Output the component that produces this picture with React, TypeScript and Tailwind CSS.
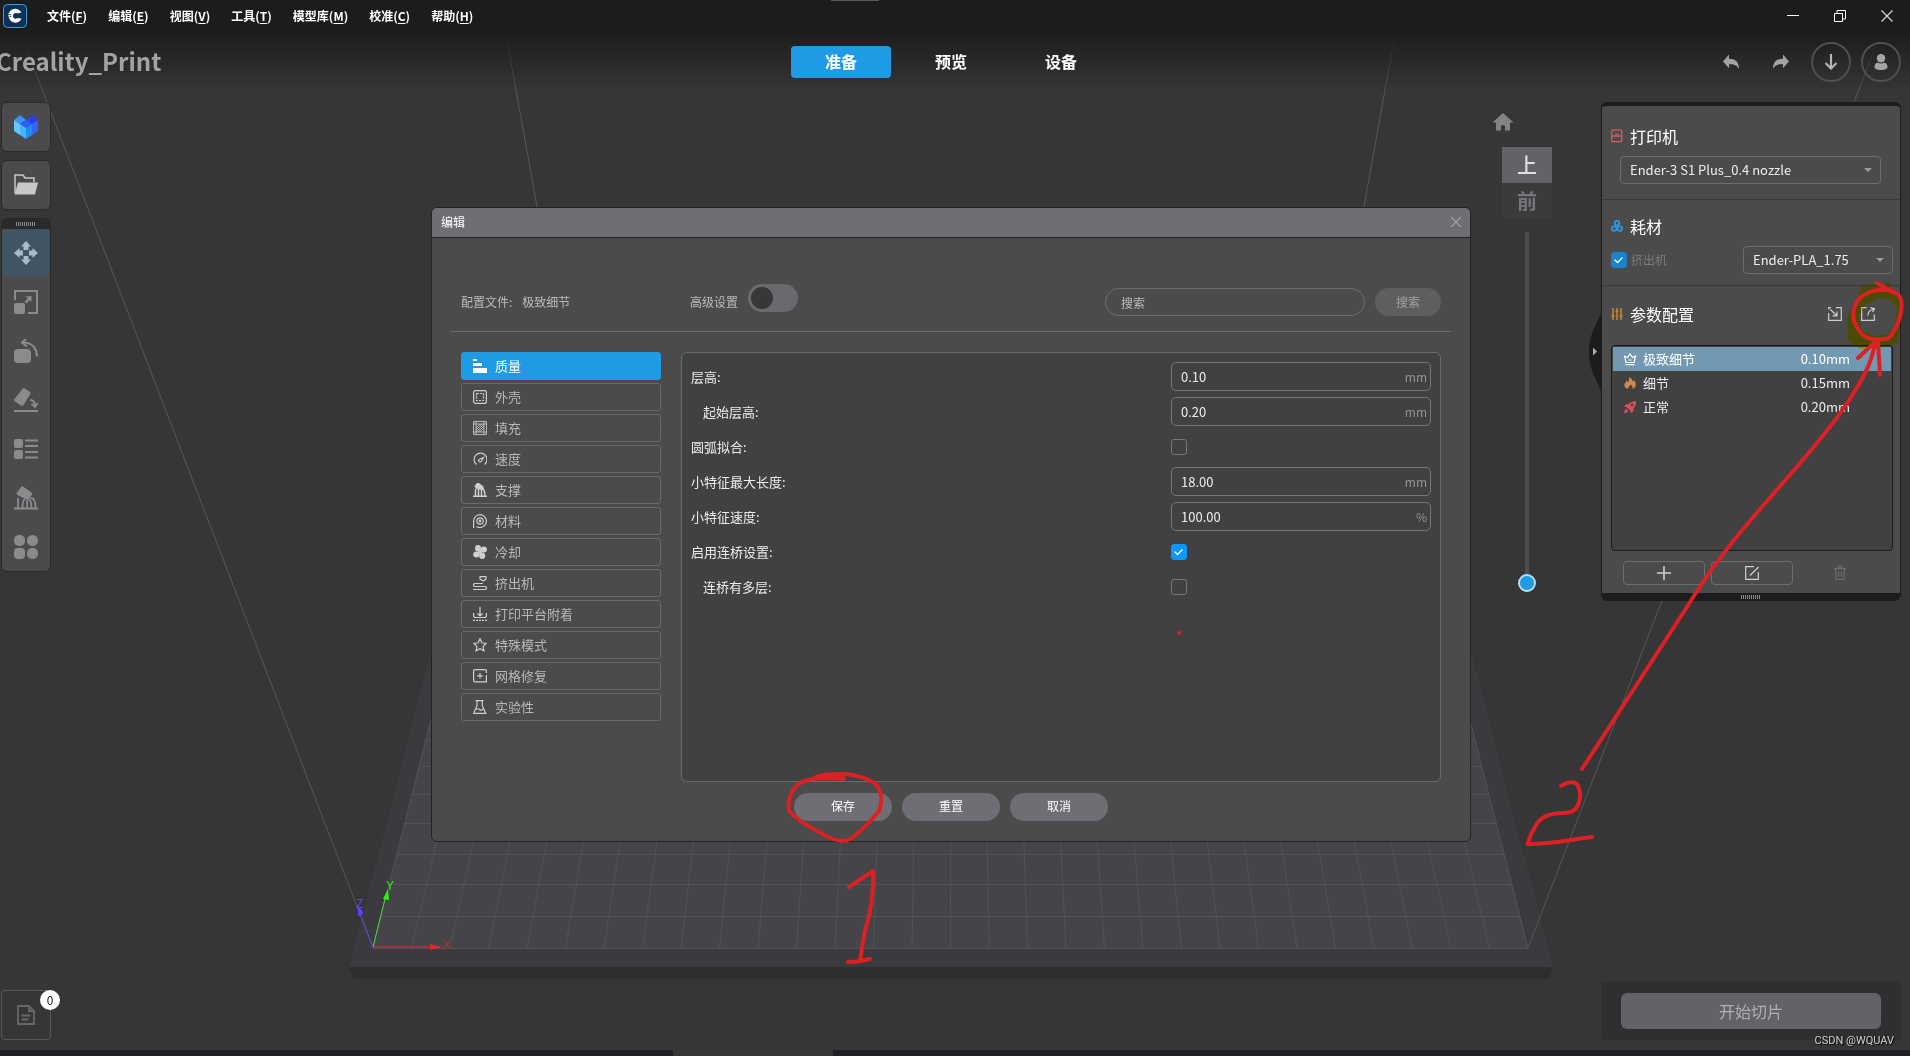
import { useState } from "react";
import type { ReactNode } from "react";

const menus = [
  { label: "文件", key: "F" },
  { label: "编辑", key: "E" },
  { label: "视图", key: "V" },
  { label: "工具", key: "T" },
  { label: "模型库", key: "M" },
  { label: "校准", key: "C" },
  { label: "帮助", key: "H" },
];

const tabs = ["准备", "预览", "设备"];

type Setting =
  | { id: string; label: string; kind: "value"; value: string; unit: string; sub?: boolean }
  | { id: string; label: string; kind: "check"; checked: boolean; sub?: boolean };

const settings: Setting[] = [
  { id: "layer-height", label: "层高:", kind: "value", value: "0.10", unit: "mm" },
  { id: "first-layer", label: "起始层高:", kind: "value", value: "0.20", unit: "mm", sub: true },
  { id: "arc-fitting", label: "圆弧拟合:", kind: "check", checked: false },
  { id: "small-length", label: "小特征最大长度:", kind: "value", value: "18.00", unit: "mm" },
  { id: "small-speed", label: "小特征速度:", kind: "value", value: "100.00", unit: "%" },
  { id: "bridge", label: "启用连桥设置:", kind: "check", checked: true },
  { id: "bridge-layers", label: "连桥有多层:", kind: "check", checked: false, sub: true },
];

export default function App() {
  return (
    <div className="relative flex min-h-screen flex-col overflow-hidden bg-[#363637] font-['Noto_Sans_CJK_SC','Noto_Sans',sans-serif] text-white">
      <Scene />
      <Header />
      <main className="relative flex flex-1 items-stretch px-px pt-2.5 pb-2.5">
        <LeftTools />
        <div className="flex-1" />
        <ViewControls />
        <button
          type="button"
          aria-label="收起面板"
          className="ml-[37px] mt-[210px] h-20 w-3 shrink-0"
        >
          <svg viewBox="0 0 12 80" className="h-20 w-3" aria-hidden>
            <path d="M12 0C9 12 0 20 0 40s9 28 12 40z" fill="#1c1c1e" />
            <path d="M4 35.500l4 4-4 4z" fill="#b0b0b0" />
          </svg>
        </button>
        <div className="mr-2 flex w-[300px] shrink-0 flex-col">
          <SidePanel />
          <div className="mt-auto rounded bg-[#2f2f31] px-5 py-[11px]">
            <button
              type="button"
              className="h-9 w-full rounded-md bg-[#636267] text-base leading-6 text-[#b0b0b2]"
            >
              开始切片
            </button>
          </div>
        </div>
      </main>
      <footer className="relative flex h-1.5 bg-[#1f2024]">
        <div className="ml-[35.25%] w-40 bg-[#363637]" />
      </footer>
      <EditDialog />
      <span className="absolute right-4 bottom-[7px] font-['Roboto',sans-serif] text-[11px] leading-4 text-[#d0d0d0] [text-shadow:1px_1px_1px_#000]">
        CSDN @WQUAV
      </span>
      <Highlighter />
      <Annotations />
    </div>
  );
}

function Header() {
  const [tab, setTab] = useState("准备");
  return (
    <header className="relative bg-linear-to-b from-[#1c1c1e] from-35% to-[#1c1c1e]/0">
      <div className="absolute top-0 left-[831px] h-px w-12 bg-[#5a5a5c]" />
      <div className="flex h-8 items-center pl-[3px]">
        <AppLogo />
        <nav className="ml-5 flex gap-[21px] text-xs font-bold">
          {menus.map((m) => (
            <button key={m.key} type="button">
              {m.label}(<span className="underline underline-offset-2">{m.key}</span>)
            </button>
          ))}
        </nav>
        <div className="ml-auto flex items-center gap-[35px] pr-[17px]">
          <button type="button" aria-label="最小化">
            <svg viewBox="0 0 12 12" className="h-3 w-3" aria-hidden>
              <path d="M0 5.500h12" stroke="#fff" />
            </svg>
          </button>
          <button type="button" aria-label="还原">
            <svg viewBox="0 0 12 12" className="h-3 w-3" fill="none" stroke="#fff" aria-hidden>
              <path d="M.5 3.500h8v8h-8zM3 3.500v-3h8.500V9H9" />
            </svg>
          </button>
          <button type="button" aria-label="关闭">
            <svg viewBox="0 0 12 12" className="h-3 w-3" stroke="#d8d8d8" strokeWidth="1.2" aria-hidden>
              <path d="M.5.5l11 11M11.500.5l-11 11" />
            </svg>
          </button>
        </div>
      </div>
      <div className="grid h-[60px] grid-cols-[1fr_auto_1fr] items-center">
        <h1 className="-ml-1 pb-0.5 text-2xl font-bold text-[#a3a3a4]">Creality_Print</h1>
        <div className="mr-2 flex gap-2.5">
          {tabs.map((t) => (
            <button
              key={t}
              type="button"
              onClick={() => setTab(t)}
              className={
                t === tab
                  ? "h-8 w-[100px] rounded bg-[#1e9be4] pb-0.5 text-base font-bold"
                  : "h-8 w-[100px] rounded pb-0.5 text-base font-bold"
              }
            >
              {t}
            </button>
          ))}
        </div>
        <div className="flex items-center justify-end gap-2.5 pr-[9px]">
          <button type="button" aria-label="撤销" className="flex size-10 items-center justify-center">
            <UndoIcon className="size-4" />
          </button>
          <button type="button" aria-label="重做" className="flex size-10 items-center justify-center">
            <UndoIcon className="size-4 -scale-x-100" />
          </button>
          <button
            type="button"
            aria-label="下载"
            className="flex size-10 items-center justify-center rounded-full border-2 border-[#4f4f51]"
          >
            <svg viewBox="0 0 16 16" className="size-4" fill="none" stroke="#b4b4b4" strokeWidth="2.200" aria-hidden>
              <path d="M8 0v14M2.500 9L8 14.500 13.500 9" />
            </svg>
          </button>
          <button
            type="button"
            aria-label="用户"
            className="flex size-10 items-center justify-center rounded-full border-2 border-[#4f4f51]"
          >
            <svg viewBox="0 0 16 16" className="size-4" fill="#a6a6a6" aria-hidden>
              <circle cx="8" cy="4.200" r="4.200" />
              <path d="M4.500 8.500Q8 10.500 11.500 8.500c2 1 3 2.500 3 4.200C14.500 15 12 16 8 16s-6.500-1-6.500-3.300c0-1.700 1-3.200 3-4.200z" />
            </svg>
          </button>
        </div>
      </div>
    </header>
  );
}

function LeftTools() {
  const box = "flex size-[50px] items-center justify-center rounded-md border border-[#2a2a2b] bg-[#4b4b4d]";
  return (
    <aside className="flex w-[50px] shrink-0 flex-col gap-2">
      <button type="button" aria-label="模型库" className={box}>
        <svg viewBox="0 0 24 24" className="size-6" aria-hidden>
          <path d="M0 5l6-5 6 5-6 4z" fill="#3b93fb" />
          <path d="M12 5l6-5 6 5-6 4z" fill="#2a3fee" />
          <path d="M6 9l6-4 6 4-6 4z" fill="#2b62f5" />
          <path d="M0 5l6 4v11l-6-4z" fill="#66c6ff" />
          <path d="M6 9l6 4v11l-6-4z" fill="#45b3fb" />
          <path d="M12 13l6-4v11l-6 4z" fill="#1f8cf0" />
          <path d="M18 9l6-4v11l-6 4z" fill="#3462fb" />
        </svg>
      </button>
      <button type="button" aria-label="打开文件" className={box}>
        <svg viewBox="0 0 24 24" className="size-6" aria-hidden>
          <path d="M1 20V2h8l2 3h9v4" fill="none" stroke="#c8c8c8" strokeWidth="1.500" />
          <path d="M4 9.500h20L21 21.500H.5z" fill="#c8c8c8" />
        </svg>
      </button>
      <div className="rounded-md border border-[#2a2a2b] bg-[#4b4b4d]">
        <div className="flex h-2.5 items-center justify-center rounded-t bg-[#2a2a2c]">
          <Grip />
        </div>
        <div className="flex flex-col gap-px">
          <ToolButton label="移动" active>
            <path d="M12 0l5 5.500h-2.500V9h-5V5.500H7zM12 24l5-5.500h-2.500V15h-5v3.500H7zM0 12l5.500-5v2.500H9v5H5.500V17zM24 12l-5.500-5v2.500H15v5h3.500V17z" />
          </ToolButton>
          <ToolButton label="缩放">
            <path d="M1 10V1h22v22H14" fill="none" stroke="currentColor" strokeWidth="2" />
            <rect y="13" width="11" height="11" rx="2" />
            <path d="M17.500 6v6l-2-2-3 3.500-2-2L14 8.500 11.500 6.500z" />
          </ToolButton>
          <ToolButton label="旋转">
            <rect y="10" width="17" height="14" rx="4" />
            <path d="M9 3.500c8 0 13.500 5 14 14" fill="none" stroke="currentColor" strokeWidth="2.200" />
            <path d="M12 0L8 3.500l5 4" fill="none" stroke="currentColor" strokeWidth="2.200" />
          </ToolButton>
          <ToolButton label="底面选择">
            <path d="M8.500 1Q9.500-.5 11 .5l5 3.500q1 1 0 2.500L9.500 17q-1 1.500-2.500.5l-6-4q-1.500-1-.5-2.500zM0 22h24v2H0z" />
            <path d="M16 12c3 0 5 2 5 6.500M17.500 16l3.500 3 2.500-4" fill="none" stroke="currentColor" strokeWidth="1.800" />
          </ToolButton>
          <ToolButton label="排列">
            <rect y="2" width="9" height="9" rx="2" />
            <rect y="13" width="9" height="9" rx="2" />
            <path d="M11 2.500h13v2H11zM11 8h13v2H11zM11 14h13v2H11zM11 19.500h13v2H11z" />
          </ToolButton>
          <ToolButton label="支撑">
            <path d="M7 1q1-1 2-.5l8.500 6q1 1 .5 2L15 13q-1 1-2.500.5L3.500 9q-1.500-1-1-2zM0 21.500h24v2H0z" />
            <path d="M4 22V12M8.500 22c0-5 .5-8 2.500-9M13 22v-8M17.500 22c0-5-1-8-3-9M21.500 22c0-6-1-10-5-10" fill="none" stroke="currentColor" strokeWidth="1.800" />
          </ToolButton>
          <ToolButton label="更多">
            <rect width="11" height="11" rx="5" />
            <circle cx="18.500" cy="5.500" r="5.500" />
            <rect y="13" width="11" height="11" rx="4" />
            <rect x="13" y="13" width="11" height="11" rx="5" />
          </ToolButton>
        </div>
      </div>
      <button
        type="button"
        aria-label="日志"
        className="relative mt-auto flex size-[50px] items-center justify-center rounded border border-[#59595b]"
      >
        <svg viewBox="0 0 18 20" className="h-5 w-[18px]" fill="none" stroke="#68686b" strokeWidth="1.800" aria-hidden>
          <path d="M1 1h11l5 5v13H1zM12 1v5h5M4.500 10.500h9M4.500 14.500h7" />
        </svg>
        <span className="absolute -top-px left-[38px] flex size-5 items-center justify-center rounded-full bg-white text-xs leading-none text-[#222]">
          0
        </span>
      </button>
    </aside>
  );
}

function ToolButton({ label, active, children }: { label: string; active?: boolean; children: ReactNode }) {
  return (
    <button
      type="button"
      aria-label={label}
      className={
        active
          ? "flex h-12 w-full items-center justify-center rounded-md bg-[#405561] text-[#a9bac8]"
          : "flex h-12 w-full items-center justify-center text-[#8b8b8e]"
      }
    >
      <svg viewBox="0 0 24 24" className="size-6" fill="currentColor" aria-hidden>
        {children}
      </svg>
    </button>
  );
}

function Grip() {
  return (
    <svg viewBox="0 0 20 4" className="h-1 w-5" aria-hidden>
      <path d="M.5 0v4M2.500 0v4M4.500 0v4M6.500 0v4M8.500 0v4M10.500 0v4M12.500 0v4M14.500 0v4M16.500 0v4M18.500 0v4" stroke="#8a8a8c" strokeWidth="1" />
    </svg>
  );
}

function ViewControls() {
  return (
    <div className="mt-[11px] flex w-[59px] shrink-0 flex-col items-end">
      <button type="button" aria-label="主视图" className="self-start">
        <svg viewBox="0 0 20 18" className="h-[18px] w-5" fill="#838386" aria-hidden>
          <path d="M10 0l10.500 9.500H17V17.500h-5V13q-2-2-4 0v4.500H3V9.500H-.5z" />
        </svg>
      </button>
      <button type="button" className="mt-4 h-9 w-[50px] bg-[#636267] text-xl leading-6 font-medium text-[#e0e0e0]">
        上
      </button>
      <button type="button" className="h-[35px] w-[50px] bg-[#3b3b3c] text-xl leading-6 font-bold text-[#77777b]">
        前
      </button>
      <input
        type="range"
        aria-label="缩放"
        defaultValue={100}
        className="mt-3.5 mr-4 h-[360px] w-[18px] appearance-none bg-transparent [writing-mode:vertical-lr] [&::-webkit-slider-runnable-track]:w-1 [&::-webkit-slider-runnable-track]:bg-[#4e4e50] [&::-webkit-slider-thumb]:-ml-[7px] [&::-webkit-slider-thumb]:size-[18px] [&::-webkit-slider-thumb]:appearance-none [&::-webkit-slider-thumb]:rounded-full [&::-webkit-slider-thumb]:border-2 [&::-webkit-slider-thumb]:border-[#b9dcf2] [&::-webkit-slider-thumb]:bg-[#1e9be4]"
      />
    </div>
  );
}

function SidePanel() {
  const [profile, setProfile] = useState("极致细节");
  const profiles = [
    { name: "极致细节", height: "0.10mm", icon: <CrownIcon /> },
    { name: "细节", height: "0.15mm", icon: <FlameIcon /> },
    { name: "正常", height: "0.20mm", icon: <RocketIcon /> },
  ];
  return (
    <section className="overflow-hidden rounded-md border border-t-4 border-b-0 border-[#1c1c1e] bg-[#4b4b4c]">
      <div className="border-b border-[#3a3a3b] pt-[18px] pr-[19px] pb-[15px] pl-[9px]">
        <PanelTitle title="打印机">
          <g fill="none" stroke="#e05a5e" strokeWidth="1.300">
            <rect x=".7" y=".2" width="10" height="11.500" rx="1" />
            <path d="M.7 6h10M4 4.200h3.500" />
          </g>
        </PanelTitle>
        <div className="mt-2 ml-[9px]">
          <Dropdown label="打印机" options={["Ender-3 S1 Plus_0.4 nozzle"]} />
        </div>
      </div>
      <div className="border-b border-[#3a3a3b] pt-3.5 pr-[7px] pb-[11px] pl-[9px]">
        <PanelTitle title="耗材">
          <g fill="none" stroke="#2f95e0" strokeWidth="1.800">
            <circle cx="6" cy="3.200" r="2.300" />
            <circle cx="3.200" cy="8.600" r="2.300" />
            <circle cx="8.800" cy="8.600" r="2.300" />
          </g>
        </PanelTitle>
        <div className="mt-2 flex items-center">
          <Check id="extruder" checked tone="bg-[#1a83cc] border-[#1a83cc]" />
          <label htmlFor="extruder" className="ml-1 text-xs leading-5 text-[#7b7b7d]">
            挤出机
          </label>
          <div className="ml-auto w-[150px]">
            <Dropdown label="耗材" options={["Ender-PLA_1.75"]} />
          </div>
        </div>
      </div>
      <div className="pt-4 pr-[7px] pb-2 pl-[9px]">
        <div className="flex items-center">
          <PanelTitle title="参数配置">
            <path d="M2 0v12M6 0v12M10 0v12M.5 8h3M4.500 3.500h3M8.500 8h3" fill="none" stroke="#d98a24" strokeWidth="1.400" />
          </PanelTitle>
          <button type="button" aria-label="导入" className="ml-auto">
            <LineIcon>
              <path d="M.7 6V13.300h12.600V.7H8M.7 2.500V.7H3M2.500 2.500l6 6M9 4.500v4.300H4.500" />
            </LineIcon>
          </button>
          <button type="button" aria-label="导出" className="mr-[18px] ml-[19px]">
            <LineIcon>
              <path d="M5.500.7H.7v12.600h12.600V7.500M7 8.500q-.5-5 6-6.500M9.500.7L13.500 1.800 11.500 5" />
            </LineIcon>
          </button>
        </div>
        <ul className="mt-[19px] h-[206px] rounded border border-[#1c1c1e] bg-[#414142] p-px">
          {profiles.map((p) => (
            <li key={p.name}>
              <button
                type="button"
                onClick={() => setProfile(p.name)}
                className={
                  p.name === profile
                    ? "flex h-6 w-full items-center bg-[#7299b1] pl-[11px] text-[13px] leading-5"
                    : "flex h-6 w-full items-center pl-[11px] text-[13px] leading-5 text-[#ededed]"
                }
              >
                {p.icon}
                <span className="ml-[7px]">{p.name}</span>
                <span className="mr-[41px] ml-auto">{p.height}</span>
              </button>
            </li>
          ))}
        </ul>
        <div className="mt-2.5 mr-3 ml-3 grid grid-cols-3 gap-1.5">
          <button type="button" aria-label="新建" className="flex h-6 items-center justify-center rounded border border-[#6d6d6f]">
            <LineIcon>
              <path d="M7 0v14M0 7h14" strokeWidth="1.600" />
            </LineIcon>
          </button>
          <button type="button" aria-label="编辑" className="flex h-6 items-center justify-center rounded border border-[#6d6d6f]">
            <LineIcon>
              <path d="M9 .7H.7v12.600h12.600V6M5 9.500L13.500 1" />
            </LineIcon>
          </button>
          <button type="button" aria-label="删除" disabled className="flex h-6 items-center justify-center text-[#6b6b6d]">
            <svg viewBox="0 0 14 14" className="size-3.5" fill="none" stroke="currentColor" strokeWidth="1.200" aria-hidden>
              <path d="M1 2.700h12M5 2.500V.7h4v1.800M2.500 3l.5 10.300h8L11.500 3M5.500 5.500v5.500M8.500 5.500v5.500" />
            </svg>
          </button>
        </div>
      </div>
      <div className="flex h-2 items-center justify-center bg-[#1c1c1e]">
        <Grip />
      </div>
    </section>
  );
}

function PanelTitle({ title, children }: { title: string; children: ReactNode }) {
  return (
    <h2 className="flex items-center gap-[7px] text-base leading-6">
      <svg viewBox="0 0 12 12" className="size-3 overflow-visible" aria-hidden>
        {children}
      </svg>
      {title}
    </h2>
  );
}

function Dropdown({ label, options }: { label: string; options: string[] }) {
  return (
    <div className="grid items-center">
      <select
        aria-label={label}
        className="col-start-1 row-start-1 h-7 w-full appearance-none rounded border border-[#6d6d6f] bg-transparent px-[9px] text-[13px] text-[#ededed]"
      >
        {options.map((o) => (
          <option key={o}>{o}</option>
        ))}
      </select>
      <svg viewBox="0 0 8 4" className="pointer-events-none col-start-1 row-start-1 mr-[9px] h-1 w-2 justify-self-end" aria-hidden>
        <path d="M0 0h8L4 4z" fill="#9c9c9e" />
      </svg>
    </div>
  );
}

function Check({ id, checked, tone }: { id: string; checked: boolean; tone: string }) {
  const [on, setOn] = useState(checked);
  return (
    <span className="grid size-4 shrink-0">
      <input
        id={id}
        type="checkbox"
        checked={on}
        onChange={(e) => setOn(e.target.checked)}
        className={`col-start-1 row-start-1 size-4 appearance-none rounded-[3px] border ${on ? tone : "border-[#77777a]"}`}
      />
      {on && (
        <svg viewBox="0 0 16 16" className="pointer-events-none col-start-1 row-start-1 size-4" fill="none" stroke="#fff" strokeWidth="1.300" aria-hidden>
          <path d="M3.500 7.500l3 3L11.500 5.500" />
        </svg>
      )}
    </span>
  );
}

function LineIcon({ children }: { children: ReactNode }) {
  return (
    <svg viewBox="0 0 14 14" className="size-3.5 shrink-0" fill="none" stroke="#cfcfd2" strokeWidth="1.200" aria-hidden>
      {children}
    </svg>
  );
}

const sections: { name: string; icon: ReactNode }[] = [
  { name: "质量", icon: <path d="M0 0h4v2H0zM0 4h9v3H0zM0 9h14v5H0z" fill="#fff" stroke="none" /> },
  {
    name: "外壳",
    icon: (
      <>
        <rect x=".6" y=".6" width="12.800" height="12.800" rx="2" />
        <path d="M4 3.500h6.500v7H3.500v-7z" strokeDasharray="2 1.200" />
      </>
    ),
  },
  {
    name: "填充",
    icon: <path d="M.5.500h13v13H.500zM3 0v14M11 0v14M0 3h14M0 11h14M3 7l4-4M3 11l8-8M7 11l4-4M3 9l6-6M5 11l6-6" strokeWidth=".8" />,
  },
  {
    name: "速度",
    icon: (
      <>
        <path d="M3.500 12.500A6.400 6.400 0 1 1 11.500 12.500" />
        <path d="M10.500 5.500L7 7a1.500 1.500 0 1 0 1.500 2z" />
      </>
    ),
  },
  {
    name: "支撑",
    icon: (
      <>
        <path d="M1.500 3l2.500-3 2 0 4.500 3.500V7L3 6z" fill="#cfced4" stroke="none" />
        <path d="M2.500 13V6M5.500 13V6M8.500 13V6M9.500 5c2 2 2.500 5 2.500 8M0 13.300h14" strokeWidth="1.500" />
      </>
    ),
  },
  {
    name: "材料",
    icon: (
      <>
        <path d="M.6 14V7A6.400 6.400 0 1 1 3.500 12.500" />
        <circle cx="7" cy="7" r="3.200" />
        <circle cx="7" cy="7" r=".8" />
      </>
    ),
  },
  {
    name: "冷却",
    icon: (
      <g fill="#cfced4" stroke="none">
        <ellipse cx="5" cy="3.300" rx="3" ry="3.300" />
        <ellipse cx="10.800" cy="4.500" rx="3.200" ry="3" />
        <ellipse cx="9.200" cy="10.700" rx="3" ry="3.300" />
        <ellipse cx="3.400" cy="9.500" rx="3.200" ry="3" />
        <circle cx="7.100" cy="7" r="2" />
      </g>
    ),
  },
  {
    name: "挤出机",
    icon: <path d="M7 .6h6v2.500l-2 1.500H9.500L7 3zM10 7.500H2a1.500 1.500 0 0 0 0 3h10a1.500 1.500 0 0 1 0 3H0" />,
  },
  {
    name: "打印平台附着",
    icon: (
      <>
        <path d="M7 0v9M4.500 6.500L7 9l2.500-2.500M.6 6v2.500q0 2 2 2h8.800q2 0 2-2V6" />
        <path d="M0 13.400h14" strokeDasharray="2 1" />
      </>
    ),
  },
  {
    name: "特殊模式",
    icon: <path d="M7 .8l1.900 4 4.400.6-3.200 3 .8 4.500L7 10.800l-3.900 2.100.8-4.500-3.200-3 4.400-.6z" />,
  },
  {
    name: "网格修复",
    icon: <path d="M13.400 4V2q0-1.400-1.400-1.400H2Q.6.6.6 2v9.500q0 1.400 1.400 1.400h11.400V6M7 4v5.500M4.200 6.800h5.600" />,
  },
  {
    name: "实验性",
    icon: <path d="M2.500.7h8M4 .7v5L.7 13.300h12L9.300 5.700v-5M3 9.500q2-1.500 3.500 0t3.500-.5" />,
  },
];

function EditDialog() {
  const [section, setSection] = useState("质量");
  return (
    <div className="absolute inset-x-0 top-[207px] flex justify-center pr-2">
      <div
        role="dialog"
        aria-labelledby="edit-title"
        className="w-[1040px] overflow-hidden rounded-md border border-[#232325] bg-[#4b4b4c] text-xs"
      >
        <div className="flex h-[30px] items-center justify-between border-b border-[#232325] bg-[#6f6e73] px-[9px] pb-0.5">
          <h2 id="edit-title">编辑</h2>
          <button type="button" aria-label="关闭">
            <svg viewBox="0 0 10 10" className="size-2.5" stroke="#a8a8ac" strokeWidth="1.200" aria-hidden>
              <path d="M0 0l10 10M10 0L0 10" />
            </svg>
          </button>
        </div>
        <div className="mx-[19px] flex h-[94px] items-end border-b border-[#6d6d6f] px-2.5 pb-[15px] text-[#bcbcbe]">
          <p className="w-[229px] leading-7">
            配置文件:<span className="ml-2.5">极致细节</span>
          </p>
          <label htmlFor="advanced" className="leading-7">
            高级设置
          </label>
          <input
            id="advanced"
            type="checkbox"
            role="switch"
            className="mb-1 ml-2.5 h-7 w-[50px] appearance-none rounded-full bg-[#6a6a6e] p-[3px] before:block before:size-[22px] before:rounded-full before:bg-[#373738] checked:bg-[#1e9be4] checked:before:ml-auto"
          />
          <input
            type="text"
            aria-label="搜索"
            placeholder="搜索"
            className="ml-auto h-7 w-[260px] rounded-full border border-[#6d6d6f] px-[15px] placeholder:text-[#bcbcbe]"
          />
          <button type="button" className="ml-2.5 h-7 w-[66px] rounded-full bg-[#5e5e61] text-[#a0a0a2]">
            搜索
          </button>
        </div>
        <div className="mx-[29px] mt-5 flex gap-5">
          <nav className="flex w-[200px] shrink-0 flex-col gap-[3px]">
            {sections.map((s) => (
              <button
                key={s.name}
                type="button"
                onClick={() => setSection(s.name)}
                className={
                  s.name === section
                    ? "flex h-7 items-center gap-2 rounded-[3px] border border-[#1e9be4] bg-[#1e9be4] pl-[11px] text-[13px] leading-5 text-white"
                    : "flex h-7 items-center gap-2 rounded-[3px] border border-[#6a6a6c] pl-[11px] text-[13px] leading-5 text-[#b9b9bb]"
                }
              >
                <LineIcon>{s.icon}</LineIcon>
                {s.name}
              </button>
            ))}
          </nav>
          <div className="h-[430px] flex-1 rounded-md border border-[#6a6a6c] bg-[#414142] px-[9px] pt-1.5 text-[13px]">
            {settings.map((s) => (
              <div key={s.id} className="flex h-[35px] items-center">
                <label htmlFor={s.id} className={s.sub ? "flex-1 pl-3 text-[#ececec]" : "flex-1 text-[#ececec]"}>
                  {s.label}
                </label>
                <div className="w-[260px]">
                  {s.kind === "value" ? (
                    <div className="flex h-[29px] items-center rounded-[5px] border border-[#77777a] pr-[3px] pl-[9px]">
                      <input id={s.id} type="text" defaultValue={s.value} className="min-w-0 flex-1 text-[#ededed] outline-none" />
                      <span className="text-xs text-[#939395]">{s.unit}</span>
                    </div>
                  ) : (
                    <Check id={s.id} checked={s.checked} tone="bg-[#0c98fb] border-[#0c98fb]" />
                  )}
                </div>
              </div>
            ))}
          </div>
        </div>
        <div className="flex justify-center gap-2.5 pt-[11px] pb-5">
          {["保存", "重置", "取消"].map((b) => (
            <button key={b} type="button" className="h-7 w-[98px] rounded-full bg-[#6f6e74] pb-0.5 text-white">
              {b}
            </button>
          ))}
        </div>
      </div>
    </div>
  );
}

// Build plate in perspective: every depth line runs to the point (950, -1323).
function Scene() {
  const near = 948;
  const far = 640;
  const k = (far + 1323) / (near + 1323);
  const columns = Array.from({ length: 31 }, (_, i) => 373 + i * 38.5);
  const rows = [663, 689, 714, 740, 766, 794, 823, 854, 884, 916, 948];
  return (
    <svg
      viewBox="0 0 1910 1056"
      preserveAspectRatio="xMidYMid slice"
      className="absolute inset-0 h-full w-full"
      fill="none"
      aria-hidden
    >
      <path d="M434 640h1034l85 327H349z" fill="#3b3a3e" />
      <path d="M349 967h1204l-4 12H353z" fill="#2e2e30" />
      <path d={`M${950 - 577 * k} ${far}H${950 + 577 * k}L1528 ${near}H373z`} fill="#454448" />
      <g stroke="#535357">
        {columns.map((x) => (
          <path key={x} d={`M${x} ${near}L${950 + (x - 950) * k} ${far}`} />
        ))}
        {rows.map((y) => {
          const half = (577.5 * (y + 1323)) / (near + 1323);
          return <path key={y} d={`M${950.5 - half} ${y + 0.5}H${950.5 + half}`} />;
        })}
      </g>
      <path d="M373 948L23 40M1528 948L1878 40M507 40l31 172M1394 40l-31 172" stroke="#57575a" />
      <path d="M373 947h60" stroke="#e02a2a" />
      <path d="M430 944l12 3-12 3z" fill="#e02a2a" />
      <path d="M373 947l12-48" stroke="#4be03a" />
      <path d="M383 899l5-10 1 11z" fill="#36f01c" />
      <path d="M373 947l-14-36" stroke="#5c48e0" />
      <path d="M358 906l5 7-4 3z" fill="#6440ff" stroke="#6440ff" />
      <g fontSize="12" fontFamily="Liberation Sans, sans-serif">
        <text x="443" y="949" fill="#c02c2c">X</text>
        <text x="386" y="890" fill="#36f01c">Y</text>
        <text x="356" y="908" fill="#5c48e0">Z</text>
      </g>
    </svg>
  );
}

// Yellow marker around the export button, blended so the button shows through.
function Highlighter() {
  return (
    <svg
      viewBox="0 0 1910 1056"
      preserveAspectRatio="xMidYMid slice"
      className="pointer-events-none absolute inset-0 h-full w-full mix-blend-multiply"
      aria-hidden
    >
      <path
        d="M1862 286l28-3v10l12 7-4 43-18 5-20 1-12-9-1-22 8-15zM1880 298l-14 6-7 12 2 14 12 6 14-1 8-10 2-16-5-8z"
        fill="#ffff10"
        fillRule="evenodd"
      />
    </svg>
  );
}

// Red pen marks drawn over the window.
function Annotations() {
  return (
    <svg
      viewBox="0 0 1910 1056"
      preserveAspectRatio="xMidYMid slice"
      className="pointer-events-none absolute inset-0 h-full w-full"
      fill="none"
      aria-hidden
    >
      <g stroke="#dc2023" strokeWidth="4" strokeLinecap="round" strokeLinejoin="round">
        <path d="M844 779C815 777 806 779 797 785 790 793 786 806 790 812 798 821 813 829 828 837 836 841 846 842 850 839 860 833 875 816 879 811 883 801 882 793 877 785 870 779 852 773 840 774 830 774 822 774 816 777H842" />
        <path d="M849 887l24-16c1 26-3 44-8 60l-5 29M848 962q10 0 22-3" />
        <path d="M1561 786c8-5 15-5 17 0 3 6 3 14-1 21-2 4-8 6-14 6-16 0-24 5-28 14-4 6-6 12-7 16-1 2 0 1 2 1 24 0 42-5 62-7" />
        <path d="M1582 769L1685 610C1714 563 1738 534 1768 500 1796 468 1828 432 1848 402 1862 380 1872 364 1875 342L1858 358M1878 342l2 33" />
        <path d="M1877 283l18 10C1888 288 1874 289 1866 294 1854 299 1852 314 1854 321 1858 331 1863 338 1873 339 1880 339 1889 341 1892 334 1899 324 1903 310 1901 300 1900 295 1896 292 1889 290" />
      </g>
      <circle cx="1179" cy="633" r="2" fill="#c92a35" />
    </svg>
  );
}

function AppLogo() {
  return (
    <svg viewBox="0 0 24 24" className="size-6" aria-hidden>
      <rect x=".5" y=".5" width="23" height="23" rx="4" fill="#0d3156" stroke="#3aa3d8" />
      <path d="M18.500 8.500C16 4.500 12 4 9 5.500c-1.500.8-2.500 2-3 3.500l-1.500.5 1.500 1-1 1 1 .8-.5 1L6 14c1.500 4.500 6 5.500 9.500 4 1.500-.7 2.500-2 3-3.500l-4-.5c-2 1.500-4.500.5-4.500-2s2.500-3.500 4.500-2.500z" fill="#f4f8fb" />
      <path d="M5 10l3 .8M6.500 13l2-.8" stroke="#0d3156" strokeWidth=".8" />
    </svg>
  );
}

function UndoIcon({ className }: { className?: string }) {
  return (
    <svg viewBox="0 0 16 16" className={className} fill="#a3a3a5" aria-hidden>
      <path d="M6 .5v4.300c6.500 0 10 3.200 10 10.200-1.800-3.500-4.500-5-10-4.800v4L0 7.500z" />
    </svg>
  );
}

function CrownIcon() {
  return (
    <svg viewBox="0 0 12 12" className="size-3 overflow-visible" fill="none" stroke="#fff" strokeWidth="1.200" aria-hidden>
      <path d="M2 9.500L.5 3l3 1.500L6 .8l2.500 3.700 3-1.500L10 9.500zM1.500 11.600h9M4.500 7h3" />
    </svg>
  );
}

function FlameIcon() {
  return (
    <svg viewBox="0 0 12 12" className="size-3" fill="#cf8850" aria-hidden>
      <path d="M5 0c3 1.500 3.500 3 3.500 4.500L10 3c1.500 2 2 4 1.500 6-.4 1.500-1.500 2.500-3 3 .6-2-.5-3.500-2-4.500C6.500 9 4 9.500 4 12 1.500 11.500 0 9.500.5 7.500.8 6 2 5.500 2.500 3.500c.7.500 1 1 1.200 1.700C5 4 5.500 2 5 0z" />
    </svg>
  );
}

function RocketIcon() {
  return (
    <svg viewBox="0 0 12 12" className="size-3" aria-hidden>
      <path d="M12 0c.3 3-.5 5.500-2.500 7.500V10L7 12l-.7-2.300L2.500 6.200 0 5.500 2.500 3h2.300C6.700 1 9 0 12 0zM.3 12c0-2 .5-3.500 1.700-4.200L4.300 10C3.500 11.500 2 12 .3 12z" fill="#d94f55" />
      <circle cx="8" cy="4" r="1.300" fill="#414142" />
    </svg>
  );
}
